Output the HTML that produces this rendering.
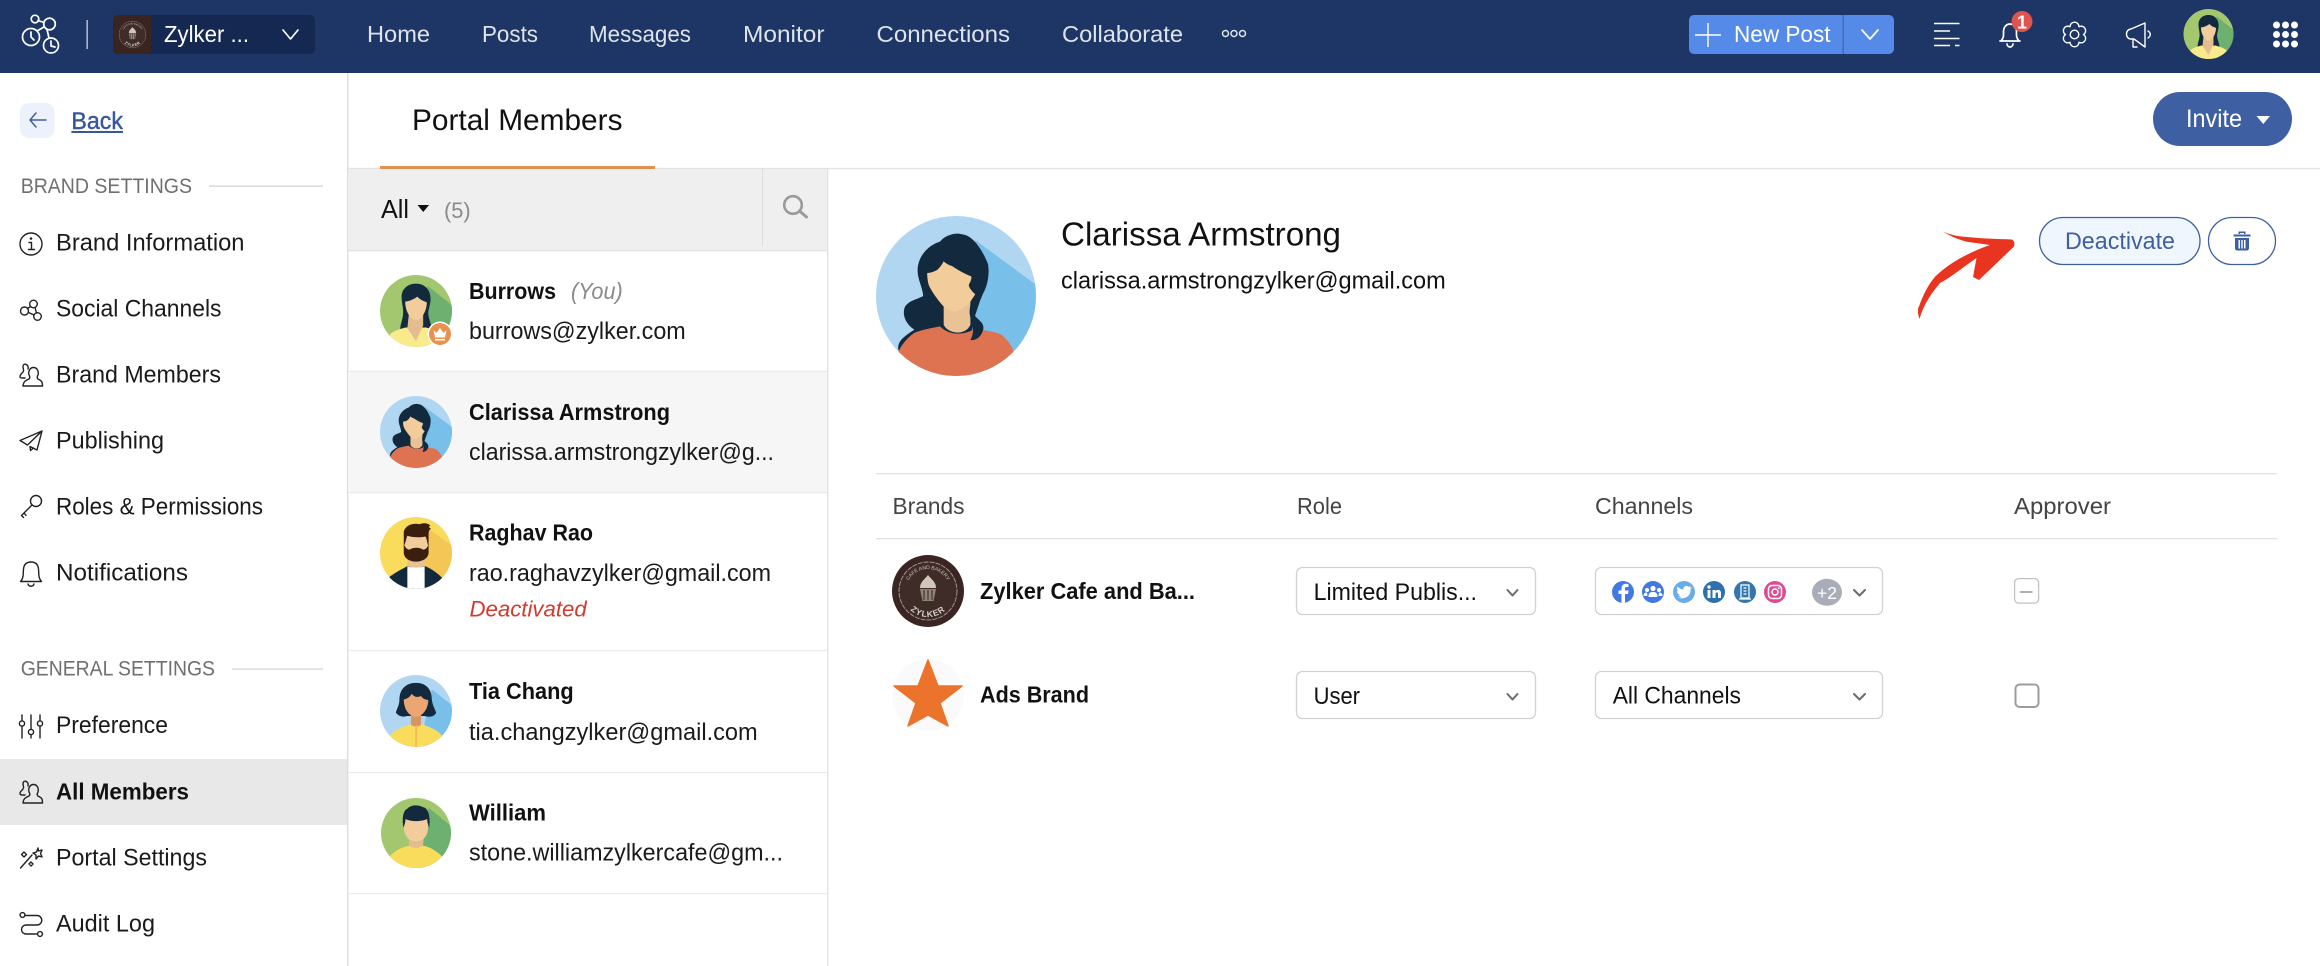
<!DOCTYPE html>
<html lang="en">
<head>
<meta charset="utf-8">
<title>Portal Members</title>
<style>
html,body{margin:0;padding:0;background:#fff;width:2320px;height:966px;overflow:hidden}
svg{display:block}
text{font-family:"Liberation Sans",sans-serif;fill:#111}
.nav{font-size:23.5px;fill:#dfe3ea}
.si{font-size:24px;fill:#1a1a1a}
.sh{font-size:21px;fill:#6f6f6f}
.nm{font-size:23.5px;font-weight:bold;fill:#111}
.em{font-size:24px;fill:#1a1a1a}
.ic{fill:none;stroke:#222;stroke-width:1.4;stroke-linecap:round;stroke-linejoin:round}
.wi{fill:none;stroke:#fff;stroke-width:1.7;stroke-linecap:round;stroke-linejoin:round}
.ch{fill:none;stroke:#6a6a6a;stroke-width:2;stroke-linecap:round;stroke-linejoin:round}
</style>
</head>
<body>
<svg xmlns="http://www.w3.org/2000/svg" width="2320" height="966" viewBox="0 0 2320 966">
<defs>
<clipPath id="cc"><circle cx="50" cy="50" r="50"/></clipPath>
<symbol id="clarissa" viewBox="0 0 100 100"><g clip-path="url(#cc)">
<rect width="100" height="100" fill="#b1d6f1"/>
<path d="M62 15L100 43V100H55Z" fill="#78bfea"/>
<path d="M14 84C13 78 18 75 24 71C19 68 16 62 18 57C20 53 26 52 29.500 50C29 44 26 40 26 34C26 25 33 18 40 16C43 12 50 10 54 11.500C60 12 66 20 70 30C71 36 70 44 66 50L62 62L60 72L30 80Z" fill="#13293d"/>
<path d="M42.300 50H59V68C56 75 45 74 42.300 68Z" fill="#e9c295"/>
<path d="M42.300 28.300C41 31 39 33 38.500 33.500C36 35 34 35.500 32 35.600C32 39 32.500 42 33.300 44C36 49 39 53 42.300 56.600C45 59 48 60 50 59.700C54 58 57 56 59 53.500L62 49C60 47 58 45 58 43C59 41 60 39 59.500 37.700C55 36 50 33 47.700 31.400C45 30.500 43.500 29.500 42.300 28.300Z" fill="#f3cc9c"/>
<path d="M14 85C16 80 20 76 24 73C29 71 35 70 40 69C43 72 47 73.500 51 73.500C55 73.500 58 72.500 61 71C67 71 73 72 78 74C82 77 85 81 86 85V100H14Z" fill="#dd7350"/>
<path d="M67 48C65 54 62 58 61.500 62C64 65 68 67 67 71C66 75 63 78 59 77.500C61 74 61 70 60 66C58 62 58 58 60 52Z" fill="#13293d"/>
</g></symbol>
<symbol id="burrows" viewBox="0 0 100 100"><g clip-path="url(#cc)">
<rect width="100" height="100" fill="#a2c76f"/>
<path d="M66 15L100 42V100H60Z" fill="#6db06f"/>
<path d="M50 12C38 12 30 20 30 30C30 40 33 46 32 55C31 65 26 72 29 82C32 90 40 90 43 84H58C62 90 70 88 72 80C73 70 67 62 67 52C68 45 71 38 70 30C69 20 62 12 50 12Z" fill="#13293d"/>
<path d="M14 82C22 76 32 74 36 73L64 73C72 75 80 78 86 82V100H14Z" fill="#f9ea8c"/>
<path d="M40 55H60V70L50 92L38 74Z" fill="#e3bd8f"/>
<path d="M35 37C42 36 48 33 52 30C56 35 61 36 65 38C65 50 58 62 50 63C42 62 35 50 35 37Z" fill="#f3cc9c"/>
</g></symbol>
<symbol id="raghav" viewBox="0 0 100 100"><g clip-path="url(#cc)">
<rect width="100" height="100" fill="#f9dc5c"/>
<path d="M62 12L100 40V100H60Z" fill="#f3c655"/>
<path d="M38 55H62V72H38Z" fill="#e9c295"/>
<path d="M12 84C22 76 32 72 38 68L50 72L62 68C72 72 80 78 88 86V100H12Z" fill="#13293d"/>
<path d="M38 68C42 71 58 71 62 68V100H38Z" fill="#fff"/>
<path d="M34 20H67V48C67 56 58 60 50 60C42 60 34 56 34 48Z" fill="#f3cc9c"/>
<path d="M33 38C36 44 39 46 42 45C46 42 55 42 59 45C62 46 65 44 67.500 38V50C67 58 58 62 50 62C42 62 33.500 58 33 50Z" fill="#3a1f0f"/>
<path d="M33 40V20C36 11 46 8 55 10C60 8 66 8 70 12C67 13 68 15 71 16C68 18 68 20 67.500 22V40C65 36 65.500 30 63 27C54 29 44 28 38 26C36 30 36 36 33 40Z" fill="#3a1f0f"/>
</g></symbol>
<symbol id="tia" viewBox="0 0 100 100"><g clip-path="url(#cc)">
<rect width="100" height="100" fill="#b1d6f1"/>
<path d="M72 20L100 42V100H55Z" fill="#78bfea"/>
<path d="M50 11C36 11 27 20 27 34C27 42 23 48 22 52C25 57 32 59 38 57H62C68 59 76 58 78 52C76 47 73 42 72 34C72 20 64 11 50 11Z" fill="#13293d"/>
<path d="M43 52H57V72H43Z" fill="#d89561"/>
<path d="M33 34C38 33 42 30 44 26C47 30 52 32 57 29C59 33 63 34 67 35C67 48 58 58 50 58C41 58 33 48 33 34Z" fill="#eba672"/>
<path d="M14 84C20 76 32 72 42 68C46 73 54 73 58 68C68 72 80 76 86 84V100H14Z" fill="#f9dc5c"/>
<rect x="49" y="70" width="2.500" height="30" fill="#f0bc55"/>
</g></symbol>
<symbol id="william" viewBox="0 0 100 100"><g clip-path="url(#cc)">
<rect width="100" height="100" fill="#a2c76f"/>
<path d="M68 14L100 40V100H55Z" fill="#6db06f"/>
<path d="M40 55H60V72H40Z" fill="#e3bd8f"/>
<path d="M12 84C20 74 32 70 40 68C44 72 56 72 60 68C70 70 80 76 88 84V100H12Z" fill="#f9dc5c"/>
<path d="M33 28H67V44C67 56 58 62 50 62C42 62 33 56 33 44Z" fill="#f3cc9c"/>
<path d="M32 42C30 30 31 18 38 15C44 9 54 10 60 13C66 14 71 22 69 42C67 38 66 34 66 30C58 34 42 34 35 30C35 34 34 38 32 42Z" fill="#13293d"/>
</g></symbol>
<symbol id="zlogo" viewBox="0 0 72 72">
<circle cx="36" cy="36" r="36" fill="#3a2522"/>
<circle cx="36" cy="36" r="29" fill="#3f2b28" stroke="#a89e94" stroke-width=".9" stroke-dasharray="5 1"/>
<path id="ztop" d="M14 36a22 22 0 0 1 44 0" fill="none"/>
<path id="zbot" d="M10 36a26 26 0 0 0 52 0" fill="none"/>
<text font-size="5" style="fill:#cfc6bc" text-anchor="middle"><textPath href="#ztop" startOffset="50%">CAFE AND BAKERY</textPath></text>
<text font-size="8.500" font-weight="bold" style="fill:#d9d2c8" text-anchor="middle" letter-spacing=".8"><textPath href="#zbot" startOffset="50%">ZYLKER</textPath></text>
<path d="M28 33C28 27 32 25 36 20C40 25 44 27 44 33Z" fill="#cfc6bc"/>
<path d="M28 34H44L41.500 46H30.500Z" fill="#8f8277"/>
<path d="M32 35V45M36 35V45M40 35V45" stroke="#3a2522" stroke-width="1"/>
</symbol>
</defs>

<!-- Top bar -->
<rect width="2320" height="73" fill="#1d3665"/>
<g class="wi" stroke-width="2">
<circle cx="35" cy="19" r="3.800"/>
<circle cx="49.500" cy="24" r="5.800"/>
<circle cx="31" cy="37" r="8.500"/>
<circle cx="51" cy="45.500" r="7.500"/>
<path d="M38 20.500L44 22.500M47 29.500L49 38M37 31L44 27M31 32V37L34 40M51 41V46L55 47"/>
</g>
<rect x="86.500" y="20" width="1.300" height="29" fill="#cdd3de"/>
<rect x="113" y="15" width="202" height="39" rx="5" fill="#152852"/>
<path d="M118 15H151V54H118a5 5 0 0 1-5-5V20a5 5 0 0 1 5-5Z" fill="#3a2420"/>
<use href="#zlogo" x="116" y="18" width="33" height="33"/>
<text x="164" y="42" font-size="23.500" style="fill:#fff" textLength="85" lengthAdjust="spacingAndGlyphs">Zylker ...</text>
<path class="wi" d="M283 30L290.500 39L298 30"/>
<text class="nav" x="367" y="42" textLength="63" lengthAdjust="spacingAndGlyphs">Home</text>
<text class="nav" x="482" y="42" textLength="56" lengthAdjust="spacingAndGlyphs">Posts</text>
<text class="nav" x="589" y="42" textLength="102" lengthAdjust="spacingAndGlyphs">Messages</text>
<text class="nav" x="743" y="42" textLength="81.500" lengthAdjust="spacingAndGlyphs">Monitor</text>
<text class="nav" x="876.500" y="42" textLength="133.500" lengthAdjust="spacingAndGlyphs">Connections</text>
<text class="nav" x="1062" y="42" textLength="121" lengthAdjust="spacingAndGlyphs">Collaborate</text>
<g fill="none" stroke="#dfe3ea" stroke-width="1.500"><circle cx="1225.500" cy="33.500" r="3"/><circle cx="1234" cy="33.500" r="3"/><circle cx="1242.500" cy="33.500" r="3"/></g>

<rect x="1689" y="15" width="205" height="39" rx="5" fill="#568ae8"/>
<rect x="1842.500" y="15" width="1.300" height="39" fill="#3d68b4"/>
<path d="M1708 23V47M1695 35H1721" stroke="#fff" stroke-width="1.400" fill="none"/>
<text x="1734" y="42" font-size="23.500" style="fill:#fff" textLength="96.500" lengthAdjust="spacingAndGlyphs">New Post</text>
<path class="wi" d="M1862 30L1870 39L1878 30"/>

<g stroke="#fff" stroke-width="1.500" fill="none">
<path d="M1934 23.500H1959.500M1934 31H1950M1934 38.500H1959.500M1934 45.500H1950M1955 45.500H1959.500"/>
</g>
<path class="wi" stroke-width="1.400" d="M2001 41C2004 38 2003.500 35 2003.500 31C2004 26 2007 24 2010 24C2013 24 2016 26 2016.500 31C2016.500 35 2016 38 2019 41ZM2000 41H2020M2007 44C2007.500 48 2012.500 48 2013 44"/>
<circle cx="2022" cy="21.500" r="10.500" fill="#e0544f"/>
<text x="2022" y="28.500" font-size="18" font-weight="bold" text-anchor="middle" style="fill:#fff">1</text>
<g transform="translate(2074.500 34.500)" class="wi" style="stroke-width:1.400"><path d="M9 0A4.500 4.500 0 0 1 4.500 7.790A4.500 4.500 0 0 1-4.500 7.790A4.500 4.500 0 0 1-9 0A4.500 4.500 0 0 1-4.500-7.790A4.500 4.500 0 0 1 4.500-7.790A4.500 4.500 0 0 1 9 0Z"/><circle r="4.300"/></g>
<path class="wi" style="stroke-width:1.400" d="M2145 23V47L2134 39H2130C2127 38 2126.500 36 2126.500 34C2126.500 31 2128 29.500 2131 29ZM2133 39V47H2137M2148 31C2151 33 2151 36 2148 38"/>
<use href="#burrows" x="2183" y="9" width="51" height="50"/>
<g fill="#fff">
<circle cx="2276.500" cy="25" r="3.500"/><circle cx="2285.500" cy="25" r="3.500"/><circle cx="2294.500" cy="25" r="3.500"/>
<circle cx="2276.500" cy="34.500" r="3.500"/><circle cx="2285.500" cy="34.500" r="3.500"/><circle cx="2294.500" cy="34.500" r="3.500"/>
<circle cx="2276.500" cy="44" r="3.500"/><circle cx="2285.500" cy="44" r="3.500"/><circle cx="2294.500" cy="44" r="3.500"/>
</g>

<!-- Sidebar -->
<rect x="347" y="73" width="1.400" height="893" fill="#dcdcdc"/>
<rect x="20" y="103" width="34.600" height="35" rx="9" fill="#edf1fb"/>
<path d="M36 113L30 120L36 127M30 120H46" fill="none" stroke="#3f5fa3" stroke-width="1.500" stroke-linecap="round" stroke-linejoin="round"/>
<text x="71.400" y="129" font-size="24" style="fill:#3656a0;stroke:#3656a0;stroke-width:.4" textLength="51.600" lengthAdjust="spacingAndGlyphs">Back</text>
<rect x="71.400" y="131" width="51.600" height="2" fill="#3656a0"/>

<text class="sh" x="20.700" y="193" textLength="171.300" lengthAdjust="spacingAndGlyphs">BRAND SETTINGS</text>
<rect x="209" y="185.500" width="114" height="1.200" fill="#cfcfcf"/>

<text class="si" x="56" y="250.700" textLength="188.500" lengthAdjust="spacingAndGlyphs">Brand Information</text>
<text class="si" x="56" y="316.700" textLength="165.500" lengthAdjust="spacingAndGlyphs">Social Channels</text>
<text class="si" x="56" y="382.500" textLength="165" lengthAdjust="spacingAndGlyphs">Brand Members</text>
<text class="si" x="56" y="448.500" textLength="108" lengthAdjust="spacingAndGlyphs">Publishing</text>
<text class="si" x="56" y="514.500" textLength="207" lengthAdjust="spacingAndGlyphs">Roles &amp; Permissions</text>
<text class="si" x="56" y="580.500" textLength="132" lengthAdjust="spacingAndGlyphs">Notifications</text>

<g class="ic">
<circle cx="31" cy="244" r="11"/><path d="M29 242.500H31.500V249.500M28.500 249.500H34.500"/><circle cx="31" cy="238.500" r=".6"/>
<circle cx="33.500" cy="304" r="3.800"/><circle cx="24.500" cy="311" r="4"/><circle cx="37.500" cy="316.500" r="3.800"/><path d="M27.500 308.500L30.500 306.500M28.500 312.500L34 315M35 307.500L36.500 313"/>
<path d="M28.500 386H42.500C42.500 381 41 380.500 38 379C37 378 37 376.500 38 375C39 371 37 367.500 33.500 367.500C30 367.500 28 371 29 375C30 376.500 30 378 29 379C26 380.500 23.500 381 23 386ZM28 369C29 365 25 363 23.500 365C22 367 24 369 23.500 371C23 373 20 374 20 376.500C20 378 21 378 25 378"/>
<path d="M42 431L20 440.500L27.500 445L42 431L37 450L30 446.500L30.500 450.500L33.500 448"/>
<circle cx="36" cy="501" r="5.500"/><path d="M32 505L21.500 515.500M24 513L26 515.500M21.500 515.500L23.500 517.500"/>
<path d="M20.500 581.500C24 578 23 573 23.500 569C24 564 27 562 31 562C35 562 38 564 38.500 569C39 573 38 578 41.500 581.500ZM28 584C29 587 33 587 34 584"/>
</g>

<text class="sh" x="20.700" y="675.700" textLength="194.300" lengthAdjust="spacingAndGlyphs">GENERAL SETTINGS</text>
<rect x="232" y="668.500" width="91" height="1.200" fill="#cfcfcf"/>
<rect x="0" y="759" width="347" height="66" fill="#e8e8e8"/>
<text class="si" x="56" y="733" textLength="112" lengthAdjust="spacingAndGlyphs">Preference</text>
<text class="si" x="56" y="799.500" textLength="133" lengthAdjust="spacingAndGlyphs" font-weight="bold" style="fill:#111;font-size:23.5px">All Members</text>
<text class="si" x="56" y="865.500" textLength="151" lengthAdjust="spacingAndGlyphs">Portal Settings</text>
<text class="si" x="56" y="931.500" textLength="99" lengthAdjust="spacingAndGlyphs">Audit Log</text>
<g class="ic">
<path d="M22 715V720M22 727V738M31 715V729M31 735V738M40 715V720M40 727V738"/><circle cx="22" cy="723.500" r="2.600"/><circle cx="31" cy="732" r="2.600"/><circle cx="40" cy="723.500" r="2.600"/>
<path d="M28.500 803H42.500C42.500 798 41 797.500 38 796C37 795 37 793.500 38 792C39 788 37 784.500 33.500 784.500C30 784.500 28 788 29 792C30 793.500 30 795 29 796C26 797.500 23.500 798 23 803ZM28 786C29 782 25 780 23.500 782C22 784 24 786 23.500 788C23 790 20 791 20 793.500C20 795 21 795 25 795"/>
<path d="M20.500 868L32 855M38 848L36.500 852L33 853L36 855L36 859L38.500 856L42 857L40.500 853.500L42 850L38.500 851ZM24 852L26.500 854.500L24 857L21.500 854.500ZM31 862L33 864L31 866L29 864Z"/>
<circle cx="22.500" cy="915" r="2.400"/><path d="M25.500 915.500H37A4.500 4.500 0 0 1 37 925H26A4.500 4.500 0 0 0 26 934H36.500"/><circle cx="40" cy="934" r="2.400"/>
</g>

<!-- Tab header -->
<text x="412" y="130" font-size="30" style="fill:#111" textLength="210.500" lengthAdjust="spacingAndGlyphs">Portal Members</text>
<rect x="348" y="167.800" width="1972" height="1.400" fill="#e2e2e2"/>
<rect x="380" y="166" width="275" height="3" fill="#e2914f"/>
<rect x="2153" y="92" width="139" height="54" rx="27" fill="#3f5fa3"/>
<text x="2186" y="127" font-size="25" style="fill:#fff" textLength="56" lengthAdjust="spacingAndGlyphs">Invite</text>
<path d="M2256.500 116H2270L2263.250 124Z" fill="#fff"/>

<!-- List column -->
<rect x="827" y="169" width="1.300" height="797" fill="#e2e2e2"/>
<rect x="348" y="169" width="479" height="81" fill="#efefef"/>
<rect x="348" y="250" width="479" height="1.300" fill="#e2e2e2"/>
<rect x="762" y="169" width="1" height="77" fill="#dedede"/>
<text x="381" y="218" font-size="26" style="fill:#111" textLength="28" lengthAdjust="spacingAndGlyphs">All</text>
<path d="M417.500 205H429L423.250 212Z" fill="#111"/>
<text x="444" y="218" font-size="22" style="fill:#8a8a8a" textLength="26.700" lengthAdjust="spacingAndGlyphs">(5)</text>
<circle cx="793" cy="205" r="8.800" fill="none" stroke="#9a9a9a" stroke-width="2.600"/>
<path d="M799.500 211L806.500 217" stroke="#9a9a9a" stroke-width="3" stroke-linecap="round"/>

<rect x="348" y="372" width="479" height="120" fill="#f6f6f6"/>
<g fill="#ececec">
<rect x="348" y="370.700" width="479" height="1.300"/><rect x="348" y="492" width="479" height="1.300"/>
<rect x="348" y="650" width="479" height="1.300"/><rect x="348" y="772" width="479" height="1.300"/><rect x="348" y="893" width="479" height="1.300"/>
</g>

<use href="#burrows" x="380" y="275" width="72" height="72"/>
<circle cx="440" cy="334" r="12.500" fill="#fff"/><circle cx="440" cy="334" r="11" fill="#e8924e"/>
<path d="M433.500 330L436.500 333L440 328L443.500 333L446.500 330L445 337.500H435ZM435 339H445V340.500H435Z" fill="#fff"/>
<use href="#clarissa" x="380" y="396" width="72" height="72"/>
<use href="#raghav" x="380" y="517" width="72" height="72"/>
<use href="#tia" x="380" y="675" width="72" height="72"/>
<use href="#william" x="381" y="798" width="70" height="70"/>

<text class="nm" x="469" y="299" textLength="87" lengthAdjust="spacingAndGlyphs">Burrows</text>
<text x="571" y="299" font-size="23" font-style="italic" style="fill:#8a8a8a" textLength="51.700" lengthAdjust="spacingAndGlyphs">(You)</text>
<text class="em" x="469" y="339" textLength="216.700" lengthAdjust="spacingAndGlyphs">burrows@zylker.com</text>
<text class="nm" x="469" y="420" textLength="201" lengthAdjust="spacingAndGlyphs">Clarissa Armstrong</text>
<text class="em" x="469" y="460" textLength="305" lengthAdjust="spacingAndGlyphs">clarissa.armstrongzylker@g...</text>
<text class="nm" x="469" y="540.700" textLength="124" lengthAdjust="spacingAndGlyphs">Raghav Rao</text>
<text class="em" x="469" y="581" textLength="302" lengthAdjust="spacingAndGlyphs">rao.raghavzylker@gmail.com</text>
<text x="469.500" y="616.700" font-size="22" font-style="italic" style="fill:#d5392c" textLength="117.200" lengthAdjust="spacingAndGlyphs">Deactivated</text>
<text class="nm" x="469" y="699" textLength="104.700" lengthAdjust="spacingAndGlyphs">Tia Chang</text>
<text class="em" x="469" y="740" textLength="288.700" lengthAdjust="spacingAndGlyphs">tia.changzylker@gmail.com</text>
<text class="nm" x="469" y="820.700" textLength="77" lengthAdjust="spacingAndGlyphs">William</text>
<text class="em" x="469" y="860.700" textLength="314" lengthAdjust="spacingAndGlyphs">stone.williamzylkercafe@gm...</text>

<!-- Detail -->
<use href="#clarissa" x="876" y="216" width="160" height="160"/>
<text x="1061" y="245.700" font-size="33" style="fill:#111" textLength="280" lengthAdjust="spacingAndGlyphs">Clarissa Armstrong</text>
<text x="1061" y="288.300" font-size="24" style="fill:#111" textLength="384.700" lengthAdjust="spacingAndGlyphs">clarissa.armstrongzylker@gmail.com</text>

<rect x="2039.500" y="217.500" width="160.500" height="47" rx="23.500" fill="#eff6fe" stroke="#3f5fa3" stroke-width="1.300"/>
<text x="2065" y="249" font-size="24.500" style="fill:#3f5fa3" textLength="110" lengthAdjust="spacingAndGlyphs">Deactivate</text>
<rect x="2208.500" y="217.500" width="67" height="47" rx="23.500" fill="#fff" stroke="#3f5fa3" stroke-width="1.300"/>
<path d="M2233.500 234.500H2250.500V236.500H2233.500ZM2238.500 234V231.500H2245.500V234H2244V233H2240V234ZM2235 238H2249V248C2249 249.500 2248 250.500 2246.500 250.500H2237.500C2236 250.500 2235 249.500 2235 248ZM2238.500 240V248.500H2240V240ZM2241.300 240V248.500H2242.700V240ZM2244 240V248.500H2245.500V240Z" fill="#3f5fa3" fill-rule="evenodd"/>
<path d="M1943 231.500C1951 235 1958 236.500 1967 237C1982 238.500 1998 239 2012 239.500Q2015.500 242 2014 246.500L1979 280L1973 277L1976.500 258C1962 268 1950 278 1940 283C1930 295 1923 306 1919.500 319C1917 312 1918 307 1919 306.500C1923 295 1928 285 1935 276.700C1944 268 1953 262 1963 256.700C1972 252 1981 248 1990 245C1982 243.500 1975 243 1967 241.700C1958 239.500 1950 236 1943 231.500Z" fill="#e9351f"/>

<!-- Table -->
<rect x="876" y="473" width="1401" height="1.300" fill="#e2e2e2"/>
<rect x="876" y="538" width="1401" height="1.300" fill="#e2e2e2"/>
<g font-size="23">
<text x="892.500" y="514" style="fill:#444" textLength="72" lengthAdjust="spacingAndGlyphs">Brands</text>
<text x="1297" y="514" style="fill:#444" textLength="45" lengthAdjust="spacingAndGlyphs">Role</text>
<text x="1595" y="514" style="fill:#444" textLength="98" lengthAdjust="spacingAndGlyphs">Channels</text>
<text x="2014" y="514" style="fill:#444" textLength="97" lengthAdjust="spacingAndGlyphs">Approver</text>
</g>
<use href="#zlogo" x="892" y="555" width="72" height="72"/>
<text class="nm" x="980" y="599" textLength="215" lengthAdjust="spacingAndGlyphs">Zylker Cafe and Ba...</text>
<circle cx="928" cy="695" r="36" fill="#fafafa"/>
<path d="M928 660L938 686H962L940 703L948 726L928 715L908 726L916 703L894 686H918Z" fill="#ec732c" stroke="#ec732c" stroke-width="1.500" stroke-linejoin="round"/>
<text class="nm" x="980" y="702.700" textLength="109" lengthAdjust="spacingAndGlyphs">Ads Brand</text>

<g fill="#fff" stroke="#d2d2d2" stroke-width="1.300">
<rect x="1296.500" y="567.500" width="239" height="47" rx="6"/>
<rect x="1296.500" y="671.500" width="239" height="47" rx="6"/>
<rect x="1595.500" y="567.500" width="287" height="47" rx="6"/>
<rect x="1595.500" y="671.500" width="287" height="47" rx="6"/>
</g>
<text class="em" x="1313.600" y="600" textLength="163.400" lengthAdjust="spacingAndGlyphs" style="fill:#111">Limited Publis...</text>
<text class="em" x="1313.600" y="704" textLength="46.400" lengthAdjust="spacingAndGlyphs" style="fill:#111">User</text>
<text class="em" x="1612.700" y="703.500" textLength="128.300" lengthAdjust="spacingAndGlyphs" style="fill:#111">All Channels</text>
<path class="ch" d="M1507.500 590L1512.500 595.500L1517.500 590M1507.500 694L1512.500 699.500L1517.500 694M1854 590L1859.500 595.500L1865 590M1854 694L1859.500 699.500L1865 694"/>

<circle cx="1623" cy="592" r="11" fill="#4279e0"/>
<path d="M1625 603V594H1628L1628.500 590.500H1625V588.500C1625 587.500 1625.500 587 1626.500 587H1628.500V584C1624 583 1621.500 585 1621.500 588.500V590.500H1618.500V594H1621.500V603Z" fill="#fff"/>
<circle cx="1653" cy="592" r="11" fill="#4279e0"/>
<g fill="#fff"><circle cx="1653" cy="588.500" r="2.600"/><circle cx="1647" cy="590" r="2"/><circle cx="1659" cy="590" r="2"/><path d="M1648.500 597C1648.500 593 1650 592 1653 592C1656 592 1657.500 593 1657.500 597ZM1643.500 596C1643.500 593 1645 592.500 1647 592.500L1647.500 596ZM1662.500 596C1662.500 593 1661 592.500 1659 592.500L1658.500 596Z"/></g>
<circle cx="1684" cy="592" r="11" fill="#6aade6"/>
<path d="M1677 597.500C1683 600 1691 597 1690.500 589.500L1692 587.500L1690 588L1691 586L1689 587C1686.500 584.500 1683 586.500 1683.500 589.500C1681 589.500 1679 588 1677.500 586.500C1676.500 588.500 1677.500 590.500 1678.500 591.500L1677 591C1677 593 1678.500 594.500 1680 595C1679.500 595.200 1679 595.200 1678.500 595C1679 596 1680 597 1681.500 597C1680 598 1678.500 597.800 1677 597.500Z" fill="#fff"/>
<circle cx="1714" cy="592" r="11" fill="#2e70ad"/>
<path d="M1707.500 590H1710.500V598H1707.500ZM1712.500 590H1715.300V591.200C1717 589 1721 589.500 1721 593V598H1718V593.800C1718 591.800 1715.500 592 1715.500 594V598H1712.500Z" fill="#fff"/><circle cx="1709" cy="587" r="1.700" fill="#fff"/>
<circle cx="1745" cy="592" r="11" fill="#3476ae"/>
<path d="M1741 585H1749V598H1741ZM1739 599H1751M1743.500 588H1746.500M1743.500 591H1746.500M1743.500 594H1746.500" fill="none" stroke="#fff" stroke-width="1.200"/>
<circle cx="1775" cy="592" r="11" fill="#dd4c92"/>
<rect x="1768.500" y="585.500" width="13" height="13" rx="3.500" fill="none" stroke="#fff" stroke-width="1.500"/><circle cx="1775" cy="592" r="3" fill="none" stroke="#fff" stroke-width="1.500"/><circle cx="1778.800" cy="588.200" r=".9" fill="#fff"/>
<ellipse cx="1827" cy="592.300" rx="15" ry="13.500" fill="#a8adb8"/>
<text x="1827" y="599" font-size="17.500" text-anchor="middle" style="fill:#fff">+2</text>

<rect x="2014.600" y="578.600" width="24" height="24.500" rx="4" fill="#fff" stroke="#c2c2c2" stroke-width="1.300"/>
<rect x="2020" y="591" width="12.500" height="2" fill="#b0b0b0"/>
<rect x="2015.500" y="684.500" width="23" height="22.500" rx="4" fill="#fff" stroke="#9c9c9c" stroke-width="2"/>
</svg>
</body>
</html>
